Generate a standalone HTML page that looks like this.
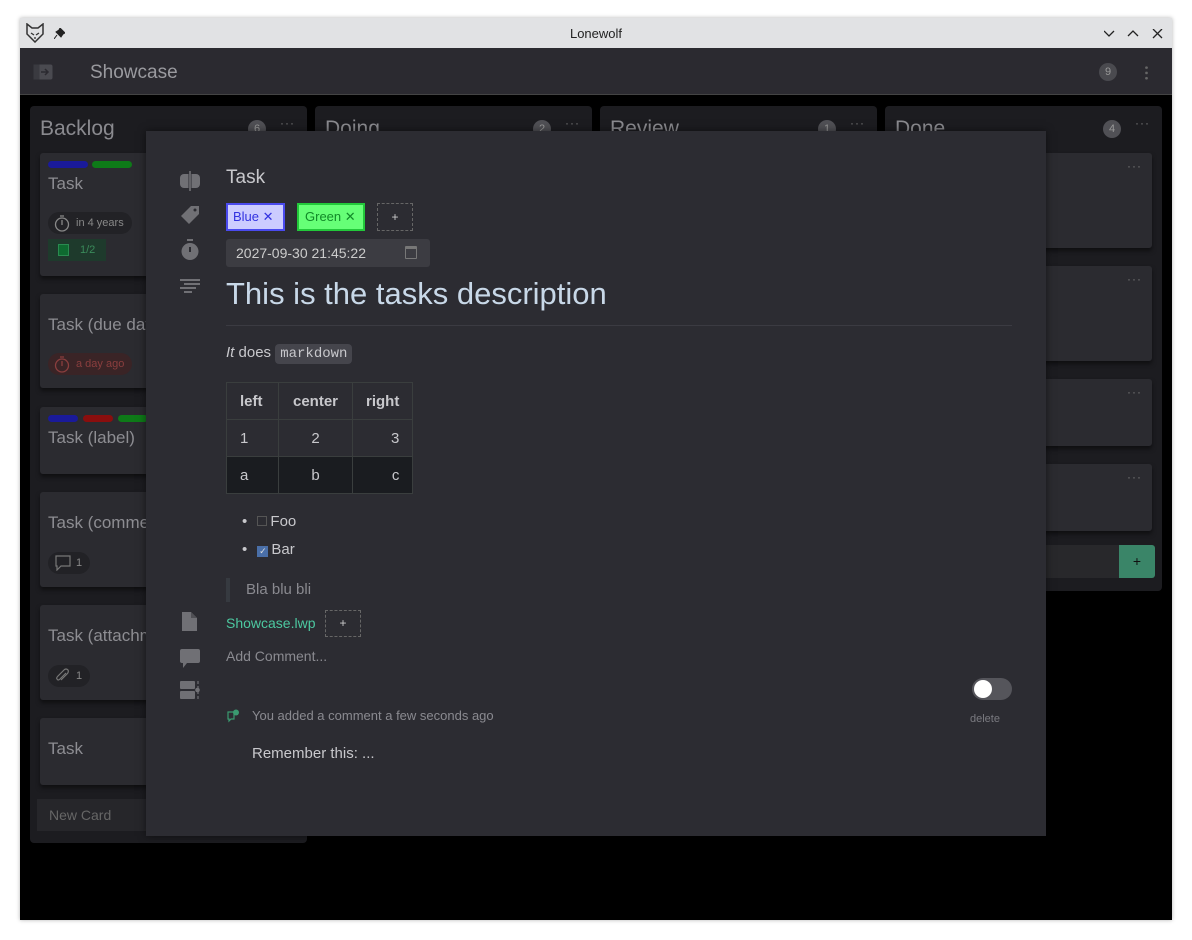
<!DOCTYPE html>
<html><head><meta charset="utf-8"><style>
*{box-sizing:border-box;margin:0;padding:0}
body{width:1192px;height:940px;background:#fff;position:relative;overflow:hidden;font-family:"Liberation Sans","DejaVu Sans",sans-serif}
.abs{position:absolute}
.win{left:20px;top:18px;width:1152px;height:902px;background:#000;overflow:hidden;box-shadow:0 0 4px rgba(0,0,0,.3)}
.tb{left:0;top:0;width:1152px;height:30px;background:#e1e2e4;color:#222;font-size:13px;text-align:center;line-height:32px}
.hdr{left:0;top:30px;width:1152px;height:47px;background:#2b2a30;border-bottom:1px solid #444}
.col{background:#1c1c20;border-radius:4px}
.ct{color:#8a8a8f;font-size:21px;position:absolute;left:10px;top:11px}
.cnt{position:absolute;width:18px;height:18px;border-radius:9px;background:#505055;color:#999;font-size:11px;text-align:center;line-height:18px;top:14px}
.dots{position:absolute;color:#777;font-size:12px;top:10px;letter-spacing:1px}
.card{position:absolute;background:#2b2b30;border-radius:3px;box-shadow:0 3px 5px rgba(0,0,0,.5)}
.cardt{position:absolute;left:8px;color:#8d8d92;font-size:17px}
.pill{position:absolute;border-radius:12px;background:#222226;color:#888;font-size:11px;height:22px;line-height:22px;padding:0 8px 0 28px}
.pill svg{position:absolute;left:6px;top:3px}
.bar{position:absolute;height:7px;border-radius:4px;top:8px;width:40px}
.modal{left:126px;top:113px;width:900px;height:705px;background:#2c2c32;box-shadow:0 0 8px rgba(0,0,0,.5)}
.mt{color:#c8c8cc}
.ico{position:absolute;left:34px}
td,th{border:1px solid #3a3e3e;height:37px;padding:0 13px;font-size:15px;color:#c8c8cc}
th{font-weight:bold}
</style></head><body>
<div class="abs win">
 <div class="abs tb">Lonewolf
  <svg class="abs" style="left:5px;top:5px" width="20" height="20" viewBox="0 0 20 20"><path d="M2 1 L7 5 L13 5 L18 1 L18 11 L10 19 L2 11 Z" fill="none" stroke="#333" stroke-width="1.5"/><path d="M6 10 L9 12 M14 10 L11 12 M10 14 L10 16" stroke="#333" stroke-width="1.3"/></svg>
  <svg class="abs" style="left:34px;top:10px" width="11" height="11" viewBox="0 0 11 11"><path d="M6 0 L11 5 L9 6 L7 9 L2 4 L5 2 Z M3 7 L0 11" fill="#222" stroke="#222"/></svg>
  <svg class="abs" style="left:1084px;top:11px" width="60" height="10" viewBox="0 0 60 10"><path d="M0 2 L5 7 L10 2 M24 7 L29 2 L34 7 M49 0 L58 9 M58 0 L49 9" stroke="#222" stroke-width="1.3" fill="none"/></svg>
 </div>
 <div class="abs hdr">
  <svg class="abs" style="left:13px;top:16px" width="20" height="16" viewBox="0 0 20 16"><rect x="0.5" y="0.5" width="19" height="15" rx="2" fill="#4a4a50"/><rect x="0.5" y="0.5" width="6" height="15" fill="#3a3a40"/><path d="M8 8 H15 M12 5 L15 8 L12 11" stroke="#2b2a30" stroke-width="1.5" fill="none"/></svg>
  <div class="abs" style="left:70px;top:14px;color:#9a9a9f;font-size:19px">Showcase</div>
  <div class="abs" style="left:1079px;top:15px;width:18px;height:18px;border-radius:9px;background:#4a4a4f;color:#999;font-size:11px;text-align:center;line-height:18px">9</div>
  <div class="abs" style="left:1125px;top:17px;width:3px;height:16px;background:radial-gradient(circle,#666 1.2px,transparent 1.5px) 0 0/3px 5.3px"></div>
 </div>
 <div class="abs col" style="left:10px;top:88px;width:277px;height:737px"><div class="ct">Backlog</div><div class="cnt" style="left:218px">6</div><div class="dots" style="left:250px">···</div>
  <div class="card" style="left:10px;top:47px;width:257px;height:123px"><div class="bar" style="left:8px;background:#1a1a9a"></div><div class="bar" style="left:52px;background:#0e7a18"></div><div class="cardt" style="top:21px">Task</div>
   <div class="pill" style="left:8px;top:59px"><svg width="16" height="17" viewBox="0 0 16 17"><circle cx="8" cy="9.5" r="6.5" fill="none" stroke="#888" stroke-width="1.3"/><path d="M6 1H10M8 5V10" stroke="#888" stroke-width="1.3"/></svg>in 4 years</div><div class="abs" style="left:8px;top:86px;width:58px;height:22px;background:#1e3a2c;color:#3a8a5a;font-size:11px;line-height:22px;padding-left:32px">1/2</div><div class="abs" style="left:18px;top:91px;width:11px;height:12px;background:#0e6a30;border:1px solid #2a8a50"></div></div>
  <div class="card" style="left:10px;top:188px;width:257px;height:94px"><div class="cardt" style="top:21px">Task (due date)</div><div class="pill" style="left:8px;top:59px;background:#3a2426;color:#8a3e3e"><svg width="16" height="17" viewBox="0 0 16 17"><circle cx="8" cy="9.5" r="6.5" fill="none" stroke="#8a3e3e" stroke-width="1.3"/><path d="M6 1H10M8 5V10" stroke="#8a3e3e" stroke-width="1.3"/></svg>a day ago</div></div>
  <div class="card" style="left:10px;top:301px;width:257px;height:67px"><div class="bar" style="left:8px;width:30px;background:#1a1a9a"></div><div class="bar" style="left:43px;width:30px;background:#8a0e0e"></div><div class="bar" style="left:78px;width:30px;background:#0e7a18"></div><div class="cardt" style="top:21px">Task (label)</div></div>
  <div class="card" style="left:10px;top:386px;width:257px;height:95px"><div class="cardt" style="top:21px">Task (comments)</div><div class="pill" style="left:8px;top:60px"><svg width="18" height="16" viewBox="0 0 18 16"><path d="M2 1H16V11H7L3 15V11H2Z" fill="none" stroke="#777" stroke-width="1.2"/></svg>1</div></div>
  <div class="card" style="left:10px;top:499px;width:257px;height:95px"><div class="cardt" style="top:21px">Task (attachment)</div><div class="pill" style="left:8px;top:60px"><svg width="16" height="16" viewBox="0 0 16 16"><path d="M12 5L6 11Q4 13 3 11Q2 10 4 8L10 2Q12 0 14 2Q15 4 13 6L7 12" fill="none" stroke="#777" stroke-width="1.2"/></svg>1</div></div>
  <div class="card" style="left:10px;top:612px;width:257px;height:67px"><div class="cardt" style="top:21px">Task</div></div>
  <div class="abs" style="left:7px;top:693px;width:263px;height:32px;background:#26262a;color:#666;font-size:14px;line-height:32px;padding-left:12px">New Card</div>
 </div>
 <div class="abs col" style="left:295px;top:88px;width:277px;height:100px"><div class="ct">Doing</div><div class="cnt" style="left:218px">2</div><div class="dots" style="left:250px">···</div></div>
 <div class="abs col" style="left:580px;top:88px;width:277px;height:100px"><div class="ct">Review</div><div class="cnt" style="left:218px">1</div><div class="dots" style="left:250px">···</div></div>
 <div class="abs col" style="left:865px;top:88px;width:277px;height:485px"><div class="ct">Done</div><div class="cnt" style="left:218px">4</div><div class="dots" style="left:250px">···</div>
  <div class="card" style="left:10px;top:47px;width:257px;height:95px"><div class="cardt" style="top:21px">Task (done)</div><div class="dots" style="left:232px;top:6px">···</div></div>
  <div class="card" style="left:10px;top:160px;width:257px;height:95px"><div class="dots" style="left:232px;top:6px">···</div></div>
  <div class="card" style="left:10px;top:273px;width:257px;height:67px"><div class="dots" style="left:232px;top:6px">···</div></div>
  <div class="card" style="left:10px;top:358px;width:257px;height:67px"><div class="dots" style="left:232px;top:6px">···</div></div>
  <div class="abs" style="left:7px;top:439px;width:234px;height:33px;background:#28282b"></div>
  <div class="abs" style="left:234px;top:439px;width:36px;height:33px;background:#3a8568;border-radius:0 3px 3px 0;color:#111;text-align:center;line-height:33px;font-size:14px">+</div>
 </div>
 <div class="abs modal">
  <svg class="ico" style="top:40px" width="20" height="20" viewBox="0 0 20 20"><rect x="0" y="3" width="20" height="14" rx="4" fill="#707075"/><rect x="8.5" y="0" width="3" height="20" fill="#2c2c32"/><rect x="9.2" y="0" width="1.6" height="20" fill="#707075"/></svg>
  <svg class="ico" style="top:74px" width="20" height="20" viewBox="0 0 20 20"><path d="M11 1 L19 1 L19 9 L9 19 L1 11 Z" fill="#707075"/><circle cx="15" cy="5" r="1.5" fill="#2c2c32"/></svg>
  <svg class="ico" style="top:108px" width="20" height="22" viewBox="0 0 20 22"><rect x="7" y="0" width="6" height="2" fill="#707075"/><circle cx="10" cy="12.5" r="8.5" fill="#707075"/><path d="M10 8 V13" stroke="#2c2c32" stroke-width="2"/></svg>
  <svg class="ico" style="top:148px" width="20" height="14" viewBox="0 0 20 14"><path d="M0 1H20M4 5H20M0 9H16M4 13H12" stroke="#707075" stroke-width="2"/></svg>
  <div class="abs mt" style="left:80px;top:36px;font-size:19px">Task</div>
  <div class="abs" style="left:80px;top:72px;width:59px;height:28px;background:#ccccff;border:2px solid #4a4aee;color:#3232e0;font-size:13px;line-height:24px;padding-left:5px">Blue ✕</div>
  <div class="abs" style="left:151px;top:72px;width:68px;height:28px;background:#66ff77;border:2px solid #22c83a;color:#118a28;font-size:13px;line-height:24px;padding-left:6px">Green ✕</div>
  <div class="abs" style="left:231px;top:72px;width:36px;height:28px;border:1px dashed #666;color:#ccc;font-size:12px;text-align:center;line-height:26px">+</div>
  <div class="abs" style="left:80px;top:108px;width:204px;height:28px;background:#3c3c42;border-radius:3px;color:#ccc;font-size:14px;line-height:28px;padding-left:10px">2027-09-30 21:45:22</div>
  <div class="abs" style="left:259px;top:115px;width:12px;height:13px;border:1px solid #777;border-radius:1px;border-top-width:3px"></div>
  <div class="abs" style="left:80px;top:145px;font-size:31px;color:#c8d8e8;font-family:'Liberation Sans',sans-serif">This is the tasks description</div>
  <div class="abs" style="left:80px;top:194px;width:786px;height:1px;background:#3b3b42"></div>
  <div class="abs mt" style="left:80px;top:213px;font-size:15px"><i>It</i> does <span style="background:#45454c;border-radius:4px;padding:2px 5px;font-family:'Liberation Mono',monospace;font-size:14px">markdown</span></div>
  <table class="abs" style="left:80px;top:251px;border-collapse:collapse">
   <tr><th style="width:52px;text-align:left">left</th><th style="width:74px;text-align:center">center</th><th style="width:60px;text-align:right">right</th></tr>
   <tr><td>1</td><td style="text-align:center">2</td><td style="text-align:right">3</td></tr>
   <tr style="background:#1a1c20"><td>a</td><td style="text-align:center">b</td><td style="text-align:right">c</td></tr>
  </table>
  <div class="abs mt" style="left:96px;top:377px;font-size:15px;line-height:28px">
   <div>• <span style="display:inline-block;width:10px;height:10px;border:1px solid #555;margin:0 3px 0 6px"></span>Foo</div>
   <div>• <span style="display:inline-block;width:11px;height:11px;background:#4a6fa8;margin:0 3px 0 6px;color:#ddd;font-size:9px;line-height:11px;text-align:center">✓</span>Bar</div>
  </div>
  <div class="abs" style="left:80px;top:447px;width:4px;height:24px;background:#363a40"></div>
  <div class="abs" style="left:100px;top:450px;font-size:15px;color:#8a8a90">Bla blu bli</div>
  <svg class="ico" style="top:481px" width="18" height="20" viewBox="0 0 18 20"><path d="M2 0 H11 L17 6 V19 H2 Z" fill="#707075"/><path d="M11 0 V6 H17" fill="#505055"/></svg>
  <div class="abs" style="left:80px;top:484px;font-size:14px;color:#4cc8a0">Showcase.lwp</div>
  <div class="abs" style="left:179px;top:479px;width:36px;height:27px;border:1px dashed #666;color:#ccc;font-size:12px;text-align:center;line-height:25px">+</div>
  <svg class="ico" style="top:518px" width="20" height="20" viewBox="0 0 20 20"><path d="M2 0 H18 Q20 0 20 2 V12 Q20 14 18 14 H7 L3 19 V14 H2 Q0 14 0 12 V2 Q0 0 2 0Z" fill="#707075"/></svg>
  <div class="abs" style="left:80px;top:517px;font-size:14px;color:#8a8a90">Add Comment...</div>
  <svg class="ico" style="top:550px" width="20" height="19" viewBox="0 0 20 19"><rect x="0" y="0" width="15" height="8" rx="1" fill="#707075"/><rect x="0" y="10" width="15" height="8" rx="1" fill="#707075"/><path d="M18 0V19" stroke="#707075" stroke-width="1.2" stroke-dasharray="3 2"/><circle cx="17.5" cy="9" r="2.3" fill="#707075"/></svg>
  <div class="abs" style="left:826px;top:547px;width:40px;height:22px;border-radius:11px;background:#55555b"></div>
  <div class="abs" style="left:828px;top:549px;width:18px;height:18px;border-radius:9px;background:#fff"></div>
  <div class="abs" style="left:824px;top:582px;font-size:11px;color:#7a7a80">delete</div>
  <svg class="abs" style="left:80px;top:578px" width="14" height="14" viewBox="0 0 14 14"><path d="M2 3 H8 V10 H5 L3 12 V10 H2Z" fill="none" stroke="#3a9a70" stroke-width="1.2"/><circle cx="10" cy="3.5" r="3" fill="#3a9a70"/></svg>
  <div class="abs" style="left:106px;top:577px;font-size:13px;color:#8a8a90">You added a comment a few seconds ago</div>
  <div class="abs mt" style="left:106px;top:614px;font-size:15px">Remember this: ...</div>
 </div>
</div>
</body></html>
